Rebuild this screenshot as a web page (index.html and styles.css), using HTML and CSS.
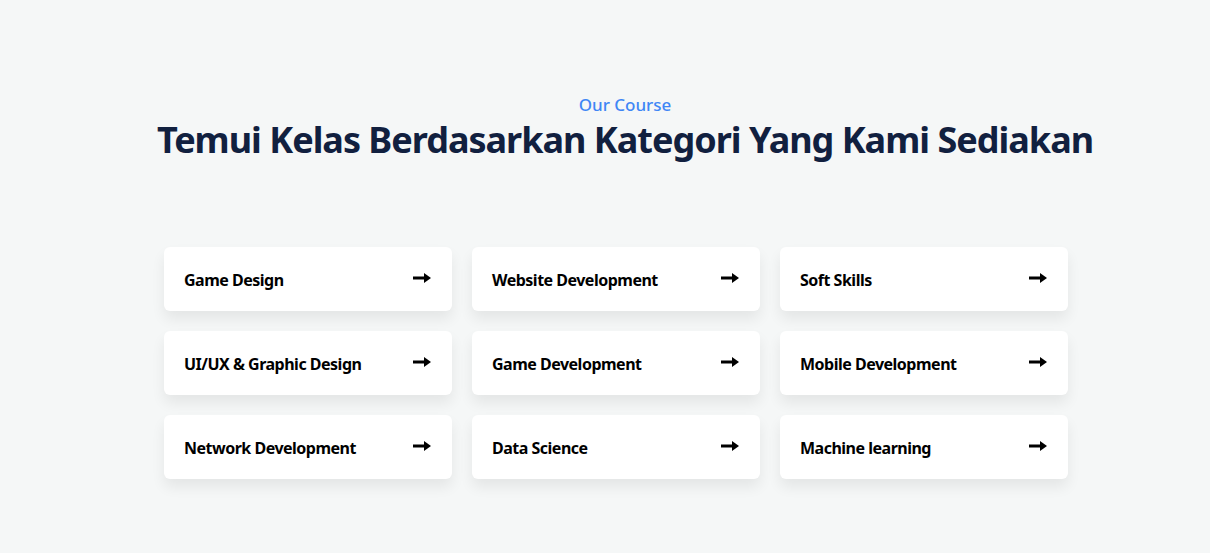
FILE: index.html
```html
<!DOCTYPE html>
<html lang="id">
<head>
<meta charset="utf-8">
<title>Our Course</title>
<link rel="stylesheet" href="styles.css">
</head>
<body>
<section class="course">
  <header class="course-head">
    <p class="eyebrow">Our Course</p>
    <h1 class="title">Temui Kelas Berdasarkan Kategori Yang Kami Sediakan</h1>
  </header>
  <div class="grid-wrap">
    <div class="grid">
      <a class="card" href="#"><span>Game Design</span><svg class="arrow" viewBox="0 0 18 10" width="18" height="10"><rect x="0" y="3.5" width="12" height="3"/><path d="M11 0 L18 5 L11 10 Z"/></svg></a>
      <a class="card" href="#"><span>Website Development</span><svg class="arrow" viewBox="0 0 18 10" width="18" height="10"><rect x="0" y="3.5" width="12" height="3"/><path d="M11 0 L18 5 L11 10 Z"/></svg></a>
      <a class="card" href="#"><span>Soft Skills</span><svg class="arrow" viewBox="0 0 18 10" width="18" height="10"><rect x="0" y="3.5" width="12" height="3"/><path d="M11 0 L18 5 L11 10 Z"/></svg></a>
      <a class="card" href="#"><span>UI/UX &amp; Graphic Design</span><svg class="arrow" viewBox="0 0 18 10" width="18" height="10"><rect x="0" y="3.5" width="12" height="3"/><path d="M11 0 L18 5 L11 10 Z"/></svg></a>
      <a class="card" href="#"><span>Game Development</span><svg class="arrow" viewBox="0 0 18 10" width="18" height="10"><rect x="0" y="3.5" width="12" height="3"/><path d="M11 0 L18 5 L11 10 Z"/></svg></a>
      <a class="card" href="#"><span>Mobile Development</span><svg class="arrow" viewBox="0 0 18 10" width="18" height="10"><rect x="0" y="3.5" width="12" height="3"/><path d="M11 0 L18 5 L11 10 Z"/></svg></a>
      <a class="card" href="#"><span>Network Development</span><svg class="arrow" viewBox="0 0 18 10" width="18" height="10"><rect x="0" y="3.5" width="12" height="3"/><path d="M11 0 L18 5 L11 10 Z"/></svg></a>
      <a class="card" href="#"><span>Data Science</span><svg class="arrow" viewBox="0 0 18 10" width="18" height="10"><rect x="0" y="3.5" width="12" height="3"/><path d="M11 0 L18 5 L11 10 Z"/></svg></a>
      <a class="card" href="#"><span>Machine learning</span><svg class="arrow" viewBox="0 0 18 10" width="18" height="10"><rect x="0" y="3.5" width="12" height="3"/><path d="M11 0 L18 5 L11 10 Z"/></svg></a>
    </div>
  </div>
</section>
</body>
</html>
```

FILE: styles.css
```css
* { box-sizing: border-box; }

html, body {
  margin: 0;
  padding: 0;
}

body {
  background: #f5f7f7;
  font-family: "Noto Sans", "Open Sans", sans-serif;
  width: 1210px;
  height: 553px;
  overflow: hidden;
}

.course {
  padding-top: 95px;
}

.course-head {
  text-align: center;
  padding-left: 40px;
}

.eyebrow {
  margin: 0;
  color: #3f86f5;
  font-size: 17px;
  font-weight: 500;
  line-height: 20px;
}

.title {
  margin: 0;
  color: #11203f;
  font-size: 36px;
  font-weight: 700;
  line-height: 50px;
  letter-spacing: -1px;
}

.grid-wrap {
  width: 926px;
  margin: 82px auto 0;
  padding-left: 22px;
}

.grid {
  display: grid;
  grid-template-columns: repeat(3, 288px);
  gap: 20px;
}

.card {
  display: flex;
  align-items: center;
  justify-content: space-between;
  height: 64px;
  padding: 0 21px 0 20px;
  background: #ffffff;
  border-radius: 6px;
  box-shadow: 0 8px 14px rgba(0, 0, 0, 0.07);
  color: #000000;
  text-decoration: none;
  font-size: 16px;
  font-weight: 700;
  letter-spacing: -0.5px;
}

.card span {
  padding-top: 1px;
}

.arrow {
  fill: #000000;
  margin-top: -3px;
  flex: none;
}
```
